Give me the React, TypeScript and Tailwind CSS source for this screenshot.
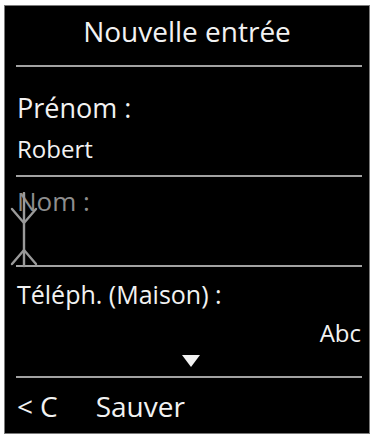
const font = { fontFamily: '"Open Sans", "Noto Sans", sans-serif' };

function Divider() {
  return <div className="ml-[11px] mr-[7px] h-[2px] shrink-0 bg-[#a2a2a2]" />;
}

function TextCursor() {
  return (
    <svg
      className="absolute left-[3px] top-[15px] h-[76px] w-[30px]"
      viewBox="0 0 30 76"
      fill="none"
      stroke="#9a9a9a"
      strokeWidth={2.4}
      strokeLinecap="round"
    >
      <path d="M16 1V74" />
      <path d="M4 17L16 31L28 17" />
      <path d="M4 72L16 58L28 72" />
    </svg>
  );
}

export default function App() {
  return (
    <div className="h-[437px] w-full bg-white pl-[4px] pt-[5px]" style={font}>
      <div className="flex h-[429px] w-[366px] flex-col border border-[#7a7a7a] bg-black text-[#f2f2f2]">
        <div className="h-[59px] shrink-0 pt-[7px] text-center text-[28px] leading-[36px]">
          Nouvelle entrée
        </div>
        <Divider />
        <div className="h-[108px] shrink-0 pl-[12px] pt-[25px]">
          <p className="text-[27px] leading-[32px]">Prénom :</p>
          <p className="mt-[10px] text-[24px] leading-[30px]">Robert</p>
        </div>
        <Divider />
        <div className="relative h-[88px] shrink-0 pl-[12px] pt-[8px]">
          <p className="text-[26px] leading-[32px] text-[#8e8e8e]">Nom :</p>
          <TextCursor />
        </div>
        <Divider />
        <div className="h-[109px] shrink-0 pt-[12px]">
          <p className="pl-[12px] text-[25px] leading-[30px]">Téléph. (Maison) :</p>
          <p className="mt-[9px] pr-[8px] text-right text-[24px] leading-[30px]">Abc</p>
          <div className="mt-[7px] flex justify-center">
            <svg className="ml-[8px] h-[12px] w-[18px]" viewBox="0 0 18 12">
              <path d="M0 0H18L9 12Z" fill="#f2f2f2" />
            </svg>
          </div>
        </div>
        <Divider />
        <div className="flex flex-1 items-start pl-[12px] pt-[11px] text-[28px] leading-[34px]">
          <span>&lt;</span>
          <span className="ml-[7px]">C</span>
          <span className="ml-[38px]">Sauver</span>
        </div>
      </div>
    </div>
  );
}
